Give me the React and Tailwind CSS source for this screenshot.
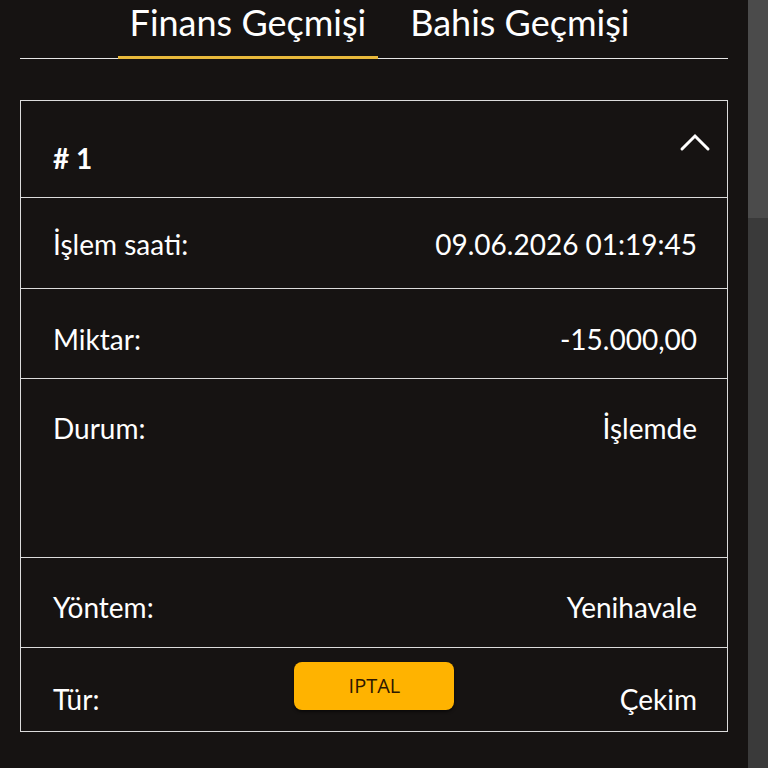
import { useState } from "react";

const rows = [
  { label: "İşlem saati:", value: "09.06.2026 01:19:45", pad: "pt-[32px] h-[91px]" },
  { label: "Miktar:", value: "-15.000,00", pad: "pt-[36px] h-[90px]" },
  { label: "Durum:", value: "İşlemde", pad: "pt-[35px] h-[179px]" },
  { label: "Yöntem:", value: "Yenihavale", pad: "pt-[35px] h-[90px]" },
];

export default function App() {
  const [tab, setTab] = useState("finans");
  const [open, setOpen] = useState(true);

  return (
    <div className="min-h-screen flex bg-[#161312] text-white" style={{ fontFamily: "Lato, 'Open Sans', sans-serif" }}>
      <main className="flex-1 px-5">
        {/* Tabs */}
        <div className="flex justify-center gap-[20px] border-b border-[#e6e6e6] pl-[11px]">
          <button
            onClick={() => setTab("finans")}
            className={`px-3 pb-[12px] text-[36px] leading-[44px] border-b-[3px] -mb-px ${tab === "finans" ? "border-[#e9b93b]" : "border-transparent"}`}
          >
            Finans Geçmişi
          </button>
          <button
            onClick={() => setTab("bahis")}
            className={`px-3 pb-[12px] text-[36px] leading-[44px] border-b-[3px] -mb-px ${tab === "bahis" ? "border-[#e9b93b]" : "border-transparent"}`}
          >
            Bahis Geçmişi
          </button>
        </div>

        {/* Card */}
        <div className="mt-[41px] border border-[#dcdcdc]">
          <div className="flex justify-between pl-8 pr-[16px] h-[96px]">
            <span className="pt-[43px] text-[28px] font-bold leading-[28px]"># 1</span>
            <button onClick={() => setOpen(!open)} className="self-start mt-[32px]">
              <svg width="32" height="20" viewBox="0 0 32 20" fill="none" stroke="white" strokeWidth="3" strokeLinecap="round">
                <polyline points="3,16 16,3 29,16" />
              </svg>
            </button>
          </div>

          {open && (
            <>
              {rows.map((r) => (
                <div
                  key={r.label}
                  className={`flex justify-between border-t border-[#dcdcdc] pl-8 pr-[30px] text-[28px] leading-[28px] ${r.pad}`}
                >
                  <span>{r.label}</span>
                  <span>{r.value}</span>
                </div>
              ))}
              <div className="flex items-start border-t border-[#dcdcdc] pl-8 pr-[30px] h-[84px] text-[28px] leading-[28px]">
                <span className="mt-[37px]">Tür:</span>
                <button className="mt-[14px] ml-[195px] w-[160px] h-[48px] rounded-lg bg-[#ffb300] text-[#2e1800] text-[20px] shadow-[0_2px_3px_rgba(0,0,0,0.5)]" style={{ fontFamily: "'Open Sans', sans-serif" }}>
                  IPTAL
                </button>
                <span className="mt-[37px] ml-auto">Çekim</span>
              </div>
            </>
          )}
        </div>
      </main>

      {/* Scrollbar */}
      <div className="w-5 flex flex-col bg-[#3a3a3a]">
        <div className="h-[218px] bg-[#4b4b4b]" />
      </div>
    </div>
  );
}
